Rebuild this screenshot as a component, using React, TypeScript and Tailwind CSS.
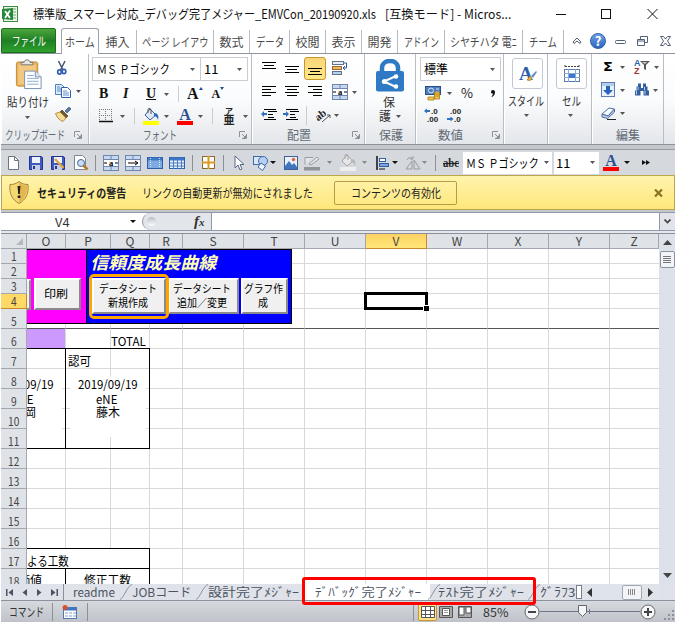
import React, { useLayoutEffect, useRef, useState } from "react";

type P = { className?: string; children?: React.ReactNode };

/* Condenses or stretches one line of text to the width of its box. */
function Fit({ className = "", children }: P) {
  const outer = useRef<HTMLSpanElement>(null);
  const inner = useRef<HTMLSpanElement>(null);
  const [s, setS] = useState(1);
  useLayoutEffect(() => {
    if (outer.current && inner.current && inner.current.offsetWidth)
      setS(outer.current.clientWidth / inner.current.offsetWidth);
  }, []);
  return (
    <span ref={outer} className={`block shrink-0 whitespace-nowrap leading-[14px] ${className}`}>
      <span ref={inner} className="inline-block origin-left" style={{ transform: s === 1 ? undefined : `scaleX(${s})` }}>
        {children}
      </span>
    </span>
  );
}

function Svg({ className = "", box = "0 0 16 16", children }: P & { box?: string }) {
  return (
    <svg viewBox={box} className={`block shrink-0 ${className}`} fill="none">
      {children}
    </svg>
  );
}

const Down = ({ className = "" }: P) => (
  <Svg box="0 0 5 3" className={`h-[3px] w-[5px] ${className}`}>
    <path d="M0 0h5L2.500 3z" fill="#555" />
  </Svg>
);
const DownBlack = ({ className = "" }: P) => (
  <Svg box="0 0 6 3" className={`h-[3px] w-[6px] ${className}`}>
    <path d="M0 0h6L3 3z" fill="#111" />
  </Svg>
);
const Launcher = ({ className = "" }: P) => (
  <Svg box="0 0 8 8" className={`h-2 w-2 ${className}`}>
    <path d="M.5 6V.5H6M3 3l3 3M7.500 3v4.500H3" stroke="#8d9197" />
    <path d="M7 4v3H4z" fill="#8d9197" />
  </Svg>
);
const Sep = ({ className = "" }: P) => <i className={`block w-px shrink-0 bg-[#c9ccd1] ${className}`} />;
const DarkSep = ({ className = "" }: P) => <i className={`block w-px shrink-0 bg-[#8b8f96] ${className}`} />;

function Lines({ rows, className = "", arrow }: { rows: number[][]; className?: string; arrow?: "l" | "r" }) {
  return (
    <Svg className={`size-4 ${className}`}>
      {rows.map(([x, y, w], i) => (
        <rect key={i} x={x} y={y} width={w} height="1" fill="#000" />
      ))}
      {arrow === "l" && <path d="M0 7l3-3v2h3v2H3v2z" fill="#2f6fc4" />}
      {arrow === "r" && <path d="M6 7L3 4v2H0v2h3v2z" fill="#2f6fc4" />}
    </Svg>
  );
}

const Paste = () => (
  <Svg box="0 0 28 32" className="ml-[14px] h-[31px] w-[28px]">
    <rect x="1" y="3" width="22" height="25" rx="2" fill="#e9b45f" stroke="#c28a36" />
    <rect x="3" y="6" width="18" height="20" fill="#f3c981" />
    <path d="M6 6V3.500h3C9 0 15 0 15 3.500h3V6z" fill="#e6e6e6" stroke="#777" />
    <path d="M9.500 12.500h11l6 6v12h-17z" fill="#fff" stroke="#7a8fb0" />
    <path d="M20.500 12.500v6h6" fill="#dbe6f5" stroke="#7a8fb0" />
    <path d="M12 17h7M12 20h12M12 23h12M12 26h12" stroke="#8eaad2" />
  </Svg>
);
const Scissors = ({ className = "" }: P) => (
  <Svg className={`size-4 ${className}`}>
    <path d="M4.500 1l4.500 9M11 1L6.500 10" stroke="#44546e" strokeWidth="1.500" />
    <ellipse cx="5.500" cy="12" rx="1.800" ry="2.200" stroke="#2e5cae" strokeWidth="1.700" />
    <ellipse cx="10" cy="11.500" rx="1.800" ry="2.200" stroke="#2e5cae" strokeWidth="1.700" />
  </Svg>
);
const Copy = ({ className = "" }: P) => (
  <Svg className={`size-4 ${className}`}>
    <path d="M.5 1.500h6l3 3v7h-9z" fill="#dceafa" stroke="#4f7fc4" />
    <path d="M6.500 4.500h6l3 3v7h-9z" fill="#fff" stroke="#2d62b0" />
    <path d="M2 4h3M2 6h4M2 8h4M8 8h4M8 10h6M8 12h6" stroke="#5b8ccc" />
  </Svg>
);
const Brush = ({ className = "" }: P) => (
  <Svg className={`size-4 ${className}`}>
    <path d="M10 5l4-4 2 2-4 4z" fill="#5a77a8" stroke="#354f7b" strokeWidth=".7" />
    <path d="M7 4l6 6-2 2-6-6z" fill="#6d5a35" stroke="#4d4026" strokeWidth=".7" />
    <path d="M5 6l6 6-3 3.500C5 14.500 2 12 .5 7.500z" fill="#f2dc96" stroke="#a87921" strokeWidth=".8" />
  </Svg>
);
const Bucket = ({ className = "", bar = "#ff0", gray = false }: P & { bar?: string; gray?: boolean }) => (
  <Svg className={`h-[17px] w-4 ${className}`} box="0 0 16 17">
    <path d="M7 1l6 6-6 5-5-5z" fill={gray ? "#e6e6e6" : "#dce9f8"} stroke={gray ? "#a6a6a6" : "#3f5f94"} />
    <path d="M5 5V1.500C5 0 8 0 8 2v4" stroke={gray ? "#a6a6a6" : "#555"} />
    <path d="M11 5c4 0 5 3 4 7-1-3-2-4-4-4z" fill={gray ? "#b5b5b5" : "#2c67b8"} />
    <rect y="13" width="16" height="4" fill={bar} />
  </Svg>
);
const Merge = ({ className = "", arrow = false }: P & { arrow?: boolean }) => (
  <Svg className={`size-4 ${className}`}>
    <rect x=".5" y=".5" width="15" height="15" fill="#c8d9ef" stroke="#6d87ae" />
    <path d="M0 4.500h16M0 11.500h16M8 1v3M8 12v4" stroke="#6d87ae" />
    <rect x="1" y="5" width="14" height="6" fill="#fff" />
    {arrow ? (
      <path d="M3 8h9M10 6l3 2-3 2" stroke="#000" />
    ) : (
      <>
        <path d="M1 8h3M12 8h3" stroke="#000" />
        <text x="8" y="10.500" textAnchor="middle" fontSize="8.500" fontWeight="bold" fontFamily="Liberation Serif, serif" fill="#000">a</text>
      </>
    )}
  </Svg>
);
const Wrap = ({ className = "" }: P) => (
  <Svg className={`size-4 ${className}`}>
    <rect x=".5" y="1.500" width="11" height="3" fill="#e8eef8" stroke="#63718c" />
    <rect x=".5" y="6.500" width="9" height="3" fill="#e9b66a" stroke="#9d6c28" />
    <rect x=".5" y="11.500" width="9" height="3" fill="#b9d0ef" stroke="#63718c" />
    <path d="M12 3h2.500v5H11M13 6l-2 2 2 2" stroke="#275ba8" />
  </Svg>
);
const Lock = () => (
  <Svg box="0 0 28 33" className="mx-auto h-[33px] w-[28px]">
    <path d="M6 14V9C6 -.5 22 -.5 22 9v5" stroke="#2e7ac4" strokeWidth="4.500" />
    <rect y="12" width="28" height="20.500" rx="2" fill="#2e7ac4" />
    <path d="M20 17L8 22.500 20 28" stroke="#fff" strokeWidth="2" />
    <circle cx="20" cy="17.500" r="2.300" fill="#fff" />
    <circle cx="8.500" cy="22.500" r="2.600" fill="#fff" />
    <circle cx="20" cy="27.500" r="2.300" fill="#fff" />
  </Svg>
);
const Money = ({ className = "" }: P) => (
  <Svg className={`size-4 ${className}`}>
    <rect x=".5" y="1.500" width="15" height="8" fill="#4d7ec0" stroke="#284e87" />
    <circle cx="6" cy="5.500" r="2.500" stroke="#d7e6fa" />
    <path d="M11 4h3M11 7h3" stroke="#d7e6fa" />
    <path d="M9.500 7h5v7h-5zM3 12h6v3H3z" fill="#f2c54a" stroke="#a67b14" strokeWidth=".8" />
    <path d="M9.500 9h5M9.500 11h5" stroke="#a67b14" strokeWidth=".8" />
  </Svg>
);
const Decimals = ({ className = "", less = false }: P & { less?: boolean }) => (
  <Svg className={`size-4 ${className}`}>
    <text x={less ? "4" : "7"} y="7" fontSize="8" fontWeight="bold" fontFamily="Liberation Sans, sans-serif" fill="#222">{less ? ".00" : ".0"}</text>
    <text x={less ? "8" : "3"} y="14.500" fontSize="8" fontWeight="bold" fontFamily="Liberation Sans, sans-serif" fill="#222">{less ? ".0" : ".00"}</text>
    {less ? <path d="M7.500 12L4.500 9.500V11H1v2h3.500v1.500z" fill="#2f6fc4" /> : <path d="M0 4l3-2.500V3h3v2H3v1.500z" fill="#2f6fc4" />}
  </Svg>
);
const TableIcon = ({ className = "", open = false }: P & { open?: boolean }) => (
  <Svg className={`size-4 ${className}`}>
    <rect x=".5" y="2.500" width="15" height="11" fill={open ? "#7fabe3" : "#eaf3ff"} stroke="#2e5fa8" />
    <path d="M1 4h14" stroke="#3c78c7" strokeWidth="3" />
    {open ? <path d="M3.500 3v10M12.500 3v10" stroke="#d5e5fa" strokeDasharray="1 1" /> : <path d="M1 8h14M1 11h14M4.500 5v9M8.500 5v9M12.500 5v9" stroke="#4a7cc0" />}
  </Svg>
);
const Disk = ({ className = "", pen = false }: P & { pen?: boolean }) => (
  <Svg className={`size-4 ${className}`}>
    <path d="M1.500 1.500h12l1 1v12h-13z" fill="#4259bd" stroke="#26358e" />
    <rect x="4" y="2" width="8" height="6" fill="#edf1fb" />
    <rect x="4" y="10" width="8" height="5" fill="#c5cde6" />
    <rect x="5" y="11" width="2" height="3" fill="#26358e" />
    {pen && <path d="M5 4l8.500 9" stroke="#e0a83e" strokeWidth="2.500" />}
  </Svg>
);
const RedA = ({ className = "" }: P) => (
  <div className={`flex h-[17px] w-4 shrink-0 flex-col items-center ${className}`}>
    <span className="h-[13px] font-['Liberation_Serif',serif] text-[16px] font-bold leading-[13px] text-[#2c4f8f]">A</span>
    <i className="block h-[4px] w-4 bg-[#f00]" />
  </div>
);

const Group = ({ w, label, launcher, children }: { w: string; label?: React.ReactNode; launcher?: string; children?: React.ReactNode }) => (
  <section className={`flex h-[90px] shrink-0 flex-col border-r border-[#b9bdc4] shadow-[inset_1px_0_#fff] ${w}`}>
    <div className="h-[73px]">{children}</div>
    <div className="flex h-[15px] items-center text-[12px] text-[#626a75]">
      {label}
      {launcher && <Launcher className={launcher} />}
    </div>
  </section>
);

const tabs: [string, string, string][] = [
  ["挿入", "w-[38px]", "w-[24px]"],
  ["ページ レイアウ", "w-[77px]", "w-[66px]"],
  ["数式", "w-[36px]", "w-[24px]"],
  ["データ", "w-[40px]", "w-[28px]"],
  ["校閲", "w-[36px]", "w-[24px]"],
  ["表示", "w-[36px]", "w-[24px]"],
  ["開発", "w-[36px]", "w-[24px]"],
  ["アドイン", "w-[47px]", "w-[35px]"],
  ["シヤチハタ 電ﾆ", "w-[78px]", "w-[67px]"],
  ["チーム", "w-[41px]", "w-[28px]"],
];

function TitleBar() {
  return (
    <header className="flex h-7 items-center bg-white">
      <Svg box="0 0 17 17" className="ml-px h-[17px] w-[17px]">
        <rect x="1.500" y=".5" width="14" height="15" fill="#e9f4e6" stroke="#3c8a44" />
        <path d="M11 3h3M11 6h3M11 9h3M11 12h3" stroke="#72a974" />
        <path d="M0 3l11-1v12L0 13z" fill="#26863a" />
        <path d="M3 5l5 7M8 4.500L3 12" stroke="#fff" strokeWidth="1.800" />
      </Svg>
      <Fit className="ml-[14px] w-[343px] text-[12.5px] text-[#111]">標準版_スマーレ対応_デバッグ完了メジャー_EMVCon_20190920.xls</Fit>
      <Fit className="ml-[9px] w-[126px] text-[12.5px] text-[#111]">[互換モード] - Micros...</Fit>
      <Svg box="0 0 102 12" className="ml-[45px] h-3 w-[102px]">
        <path d="M0 6.500h10M91.500 1l10 10M101.500 1l-10 10" stroke="#111" />
        <rect x="45.500" y="1.500" width="9" height="9" stroke="#111" />
      </Svg>
    </header>
  );
}

function TabBar() {
  return (
    <nav className="flex h-[26px] items-end border-b border-[#8e949d] bg-white text-[12px] text-[#4a4a4a]">
      <div className="flex h-[25px] w-[55px] items-center justify-center rounded-t-[2px] border border-[#1c6d1e] bg-gradient-to-b from-[#4aa63c] via-[#1d7f24] to-[#2fa12c] text-white">
        <Fit className="w-[34px]">ファイル</Fit>
      </div>
      <div className="-mb-px ml-[5px] flex h-[26px] w-[38px] items-center justify-center rounded-t-[3px] border border-b-0 border-[#9ba2ad] bg-white">
        <Fit className="w-[30px]">ホーム</Fit>
      </div>
      {tabs.map(([t, w, tw]) => (
        <div key={t} className={`flex h-[23px] shrink-0 items-center justify-center border-r border-[#b9bdc3] ${w}`}>
          <Fit className={tw}>{t}</Fit>
        </div>
      ))}
      <div className="flex h-[25px] items-center">
        <Svg box="0 0 10 8" className="ml-[8px] h-2 w-[10px]">
          <path d="M1 5l4-4 4 4-1 1.500-3-2.500-3 2.500z" fill="#fff" stroke="#4c5a6e" />
        </Svg>
        <div className="ml-[8px] flex size-4 items-center justify-center rounded-full border border-[#2b5fae] bg-gradient-to-b from-[#6d9fe3] to-[#2b66be] text-[13px] font-bold leading-none text-white">?</div>
        <Svg box="0 0 56 12" className="ml-[9px] h-3 w-[56px]">
          <rect x=".5" y="5.500" width="10" height="3" rx="1" stroke="#536077" />
          <path d="M25.500 4V1.500h7v6H30M22.500 4.500h7v6h-7zM22 6h7" stroke="#536077" />
          <path d="M45.500 1.500h3l2 2.500 2-2.500h3l-3 4.500 3 4.500h-3l-2-2.500-2 2.500h-3l3-4.500z" stroke="#536077" />
        </Svg>
      </div>
    </nav>
  );
}

function Ribbon() {
  return (
    <div className="flex h-[91px] border-b border-[#8d929a] bg-gradient-to-b from-white via-[#fbfcfd] to-[#e3e6ea]">
      <Group w="w-[88px]" label={<Fit className="ml-[4px] w-[60px]">クリップボード</Fit>} launcher="ml-[9px]">
        <div className="flex">
          <div className="w-[52px] pt-[5px]">
            <Paste />
            <Fit className="ml-[6px] mt-[5px] w-[42px] text-[12px] text-[#333]">貼り付け</Fit>
            <Down className="ml-[24px] mt-[7px]" />
          </div>
          <div className="pt-[6px]">
            <Scissors className="ml-[1px]" />
            <div className="mt-[7px] flex items-center">
              <Copy className="ml-[2px]" />
              <Down className="ml-[5px]" />
            </div>
            <Brush className="ml-[2px] mt-[7px]" />
          </div>
        </div>
      </Group>

      <Group w="w-[163px]" label={<Fit className="ml-[54px] w-[34px]">フォント</Fit>} launcher="ml-[62px]">
        <div className="flex pt-[3px] text-[12px]">
          <div className="ml-[3px] flex h-[24px] w-[109px] items-center border border-[#c9cdd3] bg-white">
            <Fit className="ml-[4px] w-[73px]">ＭＳ Ｐゴシック</Fit>
            <Down className="ml-[20px]" />
          </div>
          <div className="flex h-[24px] w-[47px] items-center border border-l-0 border-[#c9cdd3] bg-white">
            <Fit className="ml-[3px] w-[14px]">11</Fit>
            <Down className="ml-[19px]" />
          </div>
        </div>
        <div className="mt-[2px] flex h-[22px] items-center font-['Liberation_Serif',serif] text-[14px] font-bold leading-none text-[#111]">
          <span className="ml-[10px] w-[10px]">B</span>
          <span className="ml-[14px] w-[7px] italic">I</span>
          <span className="ml-[16px] w-[10px] underline">U</span>
          <Down className="ml-[8px]" />
          <Sep className="ml-[9px] h-[16px]" />
          <span className="ml-[8px] text-[16px]">A</span>
          <Svg box="0 0 4 3" className="mb-3 h-[3px] w-1"><path d="M0 3h4L2 0z" fill="#234d95" /></Svg>
          <span className="ml-[9px] text-[12px]">A</span>
          <Svg box="0 0 4 3" className="mb-3 h-[3px] w-1"><path d="M0 0h4L2 3z" fill="#234d95" /></Svg>
        </div>
        <div className="flex h-[22px] items-center">
          <Svg box="0 0 14 14" className="ml-[10px] size-[14px]">
            <path d="M.5 0v12M6.500 0v12M12.500 0v12M0 .5h13M0 6.500h13" stroke="#777" strokeDasharray="1 1" />
            <path d="M0 12.500h14" stroke="#111" strokeWidth="1.500" />
          </Svg>
          <Down className="ml-[7px]" />
          <Sep className="ml-[9px] h-[16px]" />
          <Bucket className="ml-[8px]" />
          <Down className="ml-[5px]" />
          <RedA className="ml-[8px]" />
          <Down className="ml-[5px]" />
          <Sep className="ml-[9px] h-[16px]" />
          <div className="ml-[10px] flex h-[18px] w-[12px] flex-col items-center justify-center text-[#222]">
            <span className="text-[8px] font-bold leading-[7px]">ア</span>
            <span className="text-[11px] font-bold leading-[11px]">亜</span>
          </div>
          <Down className="ml-[8px]" />
        </div>
      </Group>

      <Group w="w-[113px]" label={<Fit className="ml-[35px] w-[24px]">配置</Fit>} launcher="ml-[41px]">
        <div className="flex h-[26px] items-center pt-[2px]">
          <Lines className="ml-[10px]" rows={[[0, 2, 14], [2, 5, 10], [0, 8, 14]]} />
          <Lines className="ml-[7px]" rows={[[0, 6, 14], [2, 9, 10], [0, 12, 14]]} />
          <div className="ml-[3px] flex h-[23px] w-[22px] items-center justify-center rounded-[3px] border border-[#c8962e] bg-gradient-to-b from-[#fbd67a] to-[#ffe886]">
            <Lines className="ml-[2px]" rows={[[0, 8, 14], [2, 11, 10], [0, 14, 14]]} />
          </div>
          <Wrap className="ml-[6px]" />
        </div>
        <div className="flex h-[24px] items-center">
          <Lines className="ml-[10px]" rows={[[0, 2, 14], [0, 5, 9], [0, 8, 14], [0, 11, 9]]} />
          <Lines className="ml-[7px]" rows={[[0, 2, 14], [2, 5, 10], [0, 8, 14], [2, 11, 10]]} />
          <Lines className="ml-[7px]" rows={[[0, 2, 14], [5, 5, 9], [0, 8, 14], [5, 11, 9]]} />
          <Merge className="ml-[8px]" />
          <Down className="ml-[4px]" />
        </div>
        <div className="flex h-[22px] items-center">
          <Lines arrow="l" className="ml-[9px]" rows={[[3, 2, 12], [7, 4, 9], [7, 7, 5], [7, 10, 6], [3, 12, 12]]} />
          <Lines arrow="r" className="ml-[6px]" rows={[[3, 2, 12], [7, 4, 9], [7, 7, 5], [7, 10, 6], [3, 12, 12]]} />
          <Sep className="ml-[7px] h-[19px]" />
          <Svg className="ml-[9px] size-4">
            <text x="0" y="11" transform="rotate(-38 6 10)" fontSize="11" fontWeight="bold" fontFamily="Liberation Serif, serif" fill="#222">ab</text>
            <path d="M6 15l8-7M11 8h3v3" stroke="#555" />
          </Svg>
          <Down className="ml-[2px]" />
        </div>
      </Group>

      <Group w="w-[51px]" label={<Fit className="ml-[14px] w-[24px]">保護</Fit>}>
        <div className="pt-[5px] text-[12px] text-[#333]">
          <Lock />
          <Fit className="ml-[18px] mt-[3px] w-[12px]">保</Fit>
          <div className="flex items-center">
            <Fit className="ml-[14px] w-[12px]">護</Fit>
            <Down className="ml-[5px]" />
          </div>
        </div>
      </Group>

      <Group w="w-[88px]" label={<Fit className="ml-[22px] w-[25px]">数値</Fit>} launcher="ml-[29px]">
        <div className="flex pt-[3px]">
          <div className="ml-[4px] flex h-[24px] w-[81px] items-center border border-[#c9cdd3] bg-white text-[12px]">
            <Fit className="ml-[3px] w-[24px]">標準</Fit>
            <Down className="ml-[42px]" />
          </div>
        </div>
        <div className="mt-[1px] flex h-[22px] items-center">
          <Money className="ml-[9px]" />
          <Down className="ml-[6px]" />
          <Fit className="ml-[9px] w-[12px] text-[13px] text-[#222]">%</Fit>
          <Svg box="0 0 4 7" className="ml-[18px] h-[7px] w-1"><path d="M0 2a2 2 0 014 0c0 2-1 4-3 5l-.5-.7Q2 5 2 3.500 0 4 0 2z" fill="#111" /></Svg>
        </div>
        <div className="flex h-[22px] items-center">
          <Decimals className="ml-[8px]" />
          <Decimals less className="ml-[6px]" />
        </div>
      </Group>

      <Group w="w-[44px]">
        <div className="flex pt-[4px]">
          <div className="ml-[8px] flex h-[31px] w-[31px] items-center justify-center rounded-[3px] border border-[#c3c9d2] bg-white">
            <Svg box="0 0 18 18" className="size-[18px]">
              <text x="0" y="15" fontSize="19" fontFamily="Liberation Serif, serif" fontWeight="bold" fill="#2b5fae">A</text>
              <path d="M8 15l3-4 2 2q-1 4-5 2z" fill="#e0a83e" stroke="#996b1c" strokeWidth=".5" />
              <path d="M12 11l5-5 1 1-4 6z" fill="#6f8fc2" />
            </Svg>
          </div>
        </div>
        <Fit className="ml-[4px] mt-[5px] w-[36px] text-[12px] text-[#333]">スタイル</Fit>
        <Down className="ml-[20px] mt-[6px]" />
      </Group>

      <Group w="w-[44px]">
        <div className="flex pt-[4px]">
          <div className="ml-[8px] flex h-[31px] w-[31px] items-center justify-center rounded-[3px] border border-[#c3c9d2] bg-white">
            <Svg box="0 0 18 18" className="size-[18px]">
              <rect x="1.500" y="4.500" width="15" height="12" fill="#fff" stroke="#5779ae" />
              <path d="M1 8.500h16M1 12.500h16M5.500 4v13M12.500 4v13" stroke="#8ba8d3" />
              <rect x="6" y="9" width="6" height="4" fill="#3c78cf" />
              <path d="M2 1.500h14M2 0v3M16 0v3" stroke="#444" strokeDasharray="2 1" />
            </Svg>
          </div>
        </div>
        <Fit className="ml-[14px] mt-[5px] w-[19px] text-[12px] text-[#333]">セル</Fit>
        <Down className="ml-[20px] mt-[6px]" />
      </Group>

      <Group w="w-[72px]" label={<Fit className="ml-[24px] w-[24px]">編集</Fit>}>
        <div className="flex h-[26px] items-center">
          <Fit className="ml-[11px] w-[10px] font-['DejaVu_Sans',sans-serif] text-[13px] font-bold">Σ</Fit>
          <Down className="ml-[7px]" />
          <Svg className="ml-[9px] size-4">
            <text x="0" y="7" fontSize="9" fontWeight="bold" fontFamily="Liberation Sans, sans-serif" fill="#2b5fae">A</text>
            <text x="0" y="15" fontSize="9" fontWeight="bold" fontFamily="Liberation Sans, sans-serif" fill="#a8332c">Z</text>
            <path d="M6 2h10l-4 4v5l-2-1V6z" fill="#555" />
            <path d="M8 3h5l-2 2z" fill="#ccc" />
          </Svg>
          <Down className="ml-[4px]" />
        </div>
        <div className="flex h-[20px] items-center">
          <Svg className="ml-[9px] size-4">
            <rect x=".5" y=".5" width="13" height="14" fill="#eaf1fb" stroke="#5b7fb5" />
            <rect x="1" y="1" width="12" height="3" fill="#b4cdee" />
            <path d="M5 4h4v4h3l-5 5-5-5h3z" fill="#2464ba" />
          </Svg>
          <Down className="ml-[3px]" />
          <Svg className="ml-[9px] size-4">
            <path d="M4 1.500h3v3H4zM9 1.500h3v3H9zM2.500 4.500h4.500v4H2.500zM9 4.500h4.500v4H9zM1 8.500h5.500v5H1zM9.500 8.500H15v5H9.500zM6.500 6h3v3h-3z" fill="#345f9f" />
            <path d="M2.500 8.500v4M11 8.500v4M4 5v3M10.500 5v3" stroke="#b6cdea" />
          </Svg>
          <Down className="ml-[3px]" />
        </div>
        <div className="mt-[1px] flex h-[24px] items-center">
          <Svg className="ml-[9px] size-4">
            <path d="M1 9l7-6 5.500 1L7 11z" fill="#f7fafe" stroke="#4e6fa0" />
            <path d="M1 9v3l5.500 1.500L13.500 7V4L7 11z" fill="#b8cce8" stroke="#4e6fa0" />
            <path d="M6 14.500h9" stroke="#222" />
          </Svg>
          <Down className="ml-[3px]" />
        </div>
      </Group>
    </div>
  );
}

function QuickBar() {
  return (
    <div className="mt-[4px] flex h-[26px] items-center border-t border-[#989da6] bg-[#d5d9de]">
      <Svg className="ml-[5px] size-4">
        <path d="M2.500 1.500h6l4 4v9h-10z" fill="#fff" stroke="#6d7480" />
        <path d="M8.500 1.500v4h4" stroke="#6d7480" />
      </Svg>
      <Disk className="ml-[6px]" />
      <Disk pen className="ml-[6px]" />
      <Svg className="ml-[7px] size-4">
        <path d="M1.500.5h8l3 3v11h-11z" fill="#fff" stroke="#7d8794" />
        <circle cx="8" cy="8" r="3.500" fill="#c8def6" stroke="#50678a" />
        <path d="M10.500 10.500l4 4" stroke="#b87923" strokeWidth="2.500" />
      </Svg>
      <DarkSep className="ml-[6px] h-4" />
      <Merge className="ml-[7px]" />
      <Merge arrow className="ml-[6px]" />
      <TableIcon open className="ml-[6px]" />
      <TableIcon className="ml-[6px]" />
      <DarkSep className="ml-[7px] h-4" />
      <Svg box="0 0 14 14" className="ml-[9px] size-[14px]">
        <rect x=".5" y=".5" width="12" height="12" fill="#fff" stroke="#8a6a24" />
        <path d="M6.500 0v13M0 6.500h13" stroke="#d99a25" strokeWidth="2" />
      </Svg>
      <DarkSep className="ml-[7px] h-4" />
      <Svg className="ml-[8px] size-4">
        <path d="M3 1v12l3-3 2 5 2-1-2-4.500h4z" fill="#fff" stroke="#5a6b87" />
      </Svg>
      <Svg className="ml-[5px] size-4">
        <rect x=".5" y="1.500" width="8" height="8" fill="#d9e7f9" stroke="#3f6bab" />
        <circle cx="10" cy="6" r="4.500" fill="#b5d0f2" stroke="#3f6bab" />
        <path d="M8 8l4.500 3-3 4.500L5 12z" fill="#eef5fd" stroke="#3f6bab" />
      </Svg>
      <DownBlack className="ml-[1px]" />
      <Svg className="ml-[7px] size-4">
        <rect x="1.500" y="1.500" width="13" height="13" fill="#e8f1fc" stroke="#3f5f94" />
        <path d="M2 11l4-5 3 4 2-2 3 4v2H2z" fill="#3f76bd" />
        <circle cx="10.500" cy="4.500" r="1.800" fill="#e0683c" />
      </Svg>
      <Svg className="ml-[5px] size-4">
        <path d="M1 9.500V2.500h8M5 9l8-7 2 2-8 6z" fill="#e5e7ea" stroke="#9a9da2" />
        <rect y="12" width="16" height="3.500" fill="#909499" />
      </Svg>
      <Down className="ml-[7px] opacity-60" />
      <Bucket gray bar="#eee" className="ml-[8px]" />
      <Down className="ml-[6px] opacity-60" />
      <Svg className="ml-[8px] size-4">
        <path d="M2 1v14" stroke="#111" strokeWidth="1.500" />
        <rect x="4.500" y="3.500" width="6" height="3" fill="#fff" stroke="#345f9f" />
        <rect x="4.500" y="8.500" width="9" height="3" fill="#7ba5dc" stroke="#345f9f" />
        <path d="M4 14h6" stroke="#111" />
      </Svg>
      <DownBlack className="ml-[1px]" />
      <Svg className="ml-[7px] size-4">
        <path d="M1 14L7 6v8zM9 14V5l6 9z" fill="#d5d7da" stroke="#989b9f" />
        <path d="M2 5c1-3 4-3 6-1M8 1v3H5" stroke="#989b9f" />
      </Svg>
      <Down className="ml-[1px] opacity-60" />
      <DarkSep className="ml-[8px] h-4" />
      <Fit className="ml-[7px] w-[16px] font-['Liberation_Serif',serif] text-[12px] font-bold text-[#222]"><span className="line-through">abc</span></Fit>
      <div className="ml-[4px] flex h-[22px] w-[89px] items-center bg-white text-[12px]">
        <Fit className="ml-[3px] w-[73px]">ＭＳ Ｐゴシック</Fit>
        <Down className="ml-[5px]" />
      </div>
      <div className="ml-[2px] flex h-[22px] w-[45px] items-center bg-white text-[12px]">
        <Fit className="ml-[2px] w-[14px]">11</Fit>
        <Down className="ml-[20px]" />
      </div>
      <RedA className="ml-[4px]" />
      <DownBlack className="ml-[5px]" />
      <Svg box="0 0 8 5" className="ml-[12px] h-[5px] w-2"><path d="M0 0l4 2.500L0 5zM4 0l4 2.500L4 5z" fill="#111" /></Svg>
    </div>
  );
}

function MessageBar() {
  return (
    <div className="flex h-[35px] items-center border border-[#bba64d] bg-gradient-to-b from-[#fff4ad] to-[#fee779] text-[12px] text-[#222]">
      <Svg box="0 0 20 23" className="ml-[7px] h-[23px] w-5">
        <path d="M10 .5C7 3 4 3.500 1 3.500c-1 9 2 15 9 19 7-4 10-10 9-19-3 0-6-.5-9-3z" fill="#f6d873" stroke="#a28440" />
        <path d="M10 1.500v20c6-4 8-9 8-17-3 0-5-1-8-3z" fill="#e3b650" />
        <path d="M8.500 5h3l-.7 8H9.200zM8.700 14.500h2.600V17H8.700z" fill="#222" />
      </Svg>
      <Fit className="ml-[8px] w-[89px] font-bold">セキュリティの警告</Fit>
      <Fit className="ml-[16px] w-[171px]">リンクの自動更新が無効にされました</Fit>
      <div className="ml-[21px] flex h-[24px] w-[123px] items-center justify-center rounded-[2px] border border-[#b89b43]">
        <Fit className="w-[90px]">コンテンツの有効化</Fit>
      </div>
      <Svg box="0 0 9 8" className="ml-[197px] h-2 w-[9px]"><path d="M1 .5l7 7M8 .5l-7 7" stroke="#8b7325" strokeWidth="2.200" /></Svg>
    </div>
  );
}

function FormulaBar() {
  return (
    <div className="mt-[1px] flex h-[19px] border-y border-[#9299a4] bg-white text-[12px]">
      <div className="flex w-[141px] items-center">
        <Fit className="ml-[54px] w-[15px] text-[#333]">V4</Fit>
        <DownBlack className="ml-[60px]" />
      </div>
      <div className="flex w-[70px] items-center rounded-l-full border-l border-r border-[#9299a4] bg-[#e2e5ea]">
        <i className="ml-[4px] block size-[9px] rounded-full bg-gradient-to-b from-[#b9bdc5] to-white" />
        <span className="ml-[38px] font-['Liberation_Serif',serif] text-[15px] font-bold italic leading-none text-[#333]">f<span className="text-[11px]">x</span></span>
      </div>
      <div className="w-[447px]" />
      <div className="flex flex-1 items-center justify-center border-l border-[#9299a4] bg-[#e1e4ea]">
        <Svg box="0 0 7 5" className="h-[5px] w-[7px]"><path d="M.5.5l3 3 3-3" stroke="#444" strokeWidth="1.700" /></Svg>
      </div>
    </div>
  );
}

const cols = [["O", "w-[39px]"], ["P", "w-[45px]"], ["Q", "w-[39px]"], ["R", "w-[33px]"], ["S", "w-[61px]"], ["T", "w-[61px]"], ["U", "w-[61px]"], ["V", "w-[61px]"], ["W", "w-[61px]"], ["X", "w-[61px]"], ["Y", "w-[61px]"], ["Z", "w-[49px]"]];

const FormButton = ({ className = "", children }: P) => (
  <div className={`absolute flex flex-col items-center justify-center border-2 border-b-[#8a8a8a] border-l-white border-r-[#8a8a8a] border-t-white bg-[#f0f0f0] pb-[3px] pr-[3px] text-[11px] text-black ${className}`}>{children}</div>
);

function Sheet() {
  return (
    <div className="relative flex h-[350px] overflow-hidden">
      <div className="flex w-[658px] shrink-0 flex-col">
        <div className="flex h-[15px] shrink-0 text-[12px] leading-[14px] text-[#444]">
          <div className="flex w-[26px] shrink-0 items-end justify-end border-b border-r border-[#a3a8b0] bg-[#dfe2e7] p-[3px]">
            <Svg box="0 0 7 7" className="size-[7px]"><path d="M7 0v7H0z" fill="#b4b9c1" /></Svg>
          </div>
          {cols.map(([c, w]) => (
            <div key={c} className={`shrink-0 border-b border-r text-center ${w} ${c === "V" ? "border-[#c58a2c] bg-gradient-to-b from-[#fdd163] to-[#ffe77a]" : "border-[#a3a8b0] bg-[#dfe2e7]"}`}>{c}</div>
          ))}
        </div>
        {Array.from({ length: 18 }, (_, i) => i + 1).map((r) => (
          <div key={r} className={`flex shrink-0 ${r < 5 ? "h-[15px]" : "h-[20px]"}`}>
            <div className={`flex w-[26px] shrink-0 items-end justify-center border-b border-r text-[12px] text-[#444] ${r === 4 ? "border-[#c58a2c] bg-[#ffd966]" : "border-[#a3a8b0] bg-[#dfe2e7]"}`}>
              <Fit className={r > 9 ? "w-[11px]" : "w-[6px]"}>{r}</Fit>
            </div>
            {cols.map(([c, w]) => (
              <div key={c} className={`shrink-0 border-b ${w} ${c === "Z" ? "" : "border-r"} border-r-[#d9d9d9] ${r === 5 ? "border-b-[#555]" : "border-b-[#d9d9d9]"} ${r === 6 && c === "O" ? "bg-[#cc99ff]" : ""}`} />
            ))}
          </div>
        ))}
      </div>

      <div className="flex w-[16px] flex-col items-center bg-[#dde1e9]">
        <Svg box="0 0 9 5" className="mt-[6px] h-[5px] w-[9px]"><path d="M0 5h9L4.500 0z" fill="#444" /></Svg>
        <div className="mt-[6px] flex h-[17px] w-[15px] items-center justify-center rounded-[2px] border border-[#8c93a0] bg-[#f2f4f7]">
          <Svg box="0 0 8 8" className="size-2"><path d="M0 .5h8M0 2.500h8M0 4.500h8M0 6.500h8" stroke="#777" /></Svg>
        </div>
        <Svg box="0 0 9 5" className="mb-[6px] mt-auto h-[5px] w-[9px]"><path d="M0 0h9L4.500 5z" fill="#444" /></Svg>
      </div>

      {/* Drawing objects and text that spill over the cells */}
      <div className="absolute left-[26px] top-[15px] h-[75px] w-[265px] overflow-hidden border-y border-r border-black bg-[#00f]">
        <div className="h-full w-[60px] border-r border-black bg-[#f0f]" />
        <Fit className="absolute left-[65px] top-[5px] w-[126px] -skew-x-[14deg] text-[17px] font-bold text-[#ffffb3]">信頼度成長曲線</Fit>
        <FormButton className="-left-[20px] top-[29px] h-[31px] w-[24px]" />
        <FormButton className="left-[7px] top-[28px] h-[32px] w-[47px]"><Fit className="w-[24px]">印刷</Fit></FormButton>
        <FormButton className="left-[65px] top-[28px] h-[36px] w-[74px]">
          <Fit className="w-[58px]">データシート</Fit>
          <Fit className="w-[40px]">新規作成</Fit>
        </FormButton>
        <FormButton className="left-[141px] top-[28px] h-[36px] w-[71px]">
          <Fit className="w-[58px]">データシート</Fit>
          <Fit className="w-[50px]">追加／変更</Fit>
        </FormButton>
        <FormButton className="left-[214px] top-[28px] h-[36px] w-[47px]">
          <Fit className="w-[39px]">グラフ作</Fit>
          <Fit className="w-[10px]">成</Fit>
        </FormButton>
        <i className="absolute left-[62px] top-[24px] h-[45px] w-[80px] rounded-[5px] border-[3px] border-[#ffa500]" />
      </div>

      <div className="absolute left-[26px] top-[114px] h-[101px] w-[123px] overflow-hidden border-y border-r border-black text-[12px] text-black">
        <i className="absolute left-0 top-[27px] h-[61px] w-[35px] bg-white" />
        <i className="absolute left-[43px] top-[27px] h-[61px] w-[76px] bg-white" />
        <i className="absolute left-[38px] top-0 h-[100px] w-px bg-black" />
        <Fit className="absolute left-[41px] top-[5px] w-[23px]">認可</Fit>
        <Fit className="absolute left-[51px] top-[28px] w-[60px]">2019/09/19</Fit>
        <Fit className="absolute left-[69px] top-[43px] w-[21px]">eNE</Fit>
        <Fit className="absolute left-[69px] top-[56px] w-[24px]">藤木</Fit>
        <Fit className="absolute -left-[33px] top-[28px] w-[60px]">2019/09/19</Fit>
        <Fit className="absolute -left-[15px] top-[43px] w-[21px]">eNE</Fit>
        <Fit className="absolute -left-[15px] top-[56px] w-[24px]">富岡</Fit>
      </div>
      <Fit className="absolute left-[110px] top-[100px] w-[35px] text-[12px]">TOTAL</Fit>

      <div className="absolute left-[26px] top-[314px] h-[36px] w-[123px] overflow-hidden border-r border-t border-black text-[12px]">
        <i className="absolute left-0 top-0 h-[19px] w-[122px] bg-white" />
        <i className="absolute left-0 top-[19px] h-px w-[122px] bg-black" />
        <i className="absolute left-[38px] top-[20px] h-4 w-px bg-black" />
        <i className="absolute left-[83px] top-[20px] h-4 w-px bg-white" />
        <Fit className="absolute left-0 top-[5px] w-[42px]">よる工数</Fit>
        <Fit className="absolute -left-[9px] top-[24px] w-[24px]">価値</Fit>
        <Fit className="absolute left-[57px] top-[24px] w-[47px]">修正工数</Fit>
      </div>

      <div className="absolute left-[363px] top-[58px] h-[18px] w-[64px] border-[3px] border-black" />
      <i className="absolute left-[422px] top-[71px] size-[6px] border-l border-t border-white bg-black" />
    </div>
  );
}

const Slash = ({ className = "" }: P) => (
  <Svg box="0 0 14 16" className={`h-4 w-[14px] ${className}`}><path d="M1 15.500C5 14 8 2 13 .5" stroke="#8a919d" /></Svg>
);

function SheetTabs() {
  return (
    <div className="relative flex h-[17px] items-center border-b border-[#8d939e] bg-[#dfe2e8] text-[12px] text-[#4b5462]">
      <Svg box="0 0 52 7" className="ml-[5px] h-[7px] w-[52px]">
        <path d="M0 0h1.500v7H0zM7 0v7L2.500 3.500zM21 0v7l-4.500-3.500zM31 0v7l4.500-3.500zM45 0v7l4.500-3.500zM50.500 0H52v7h-1.500z" fill="#4b5462" />
      </Svg>
      <i className="ml-[5px] h-4 w-px bg-[#8a919d]" />
      <Fit className="ml-[9px] w-[42px]">readme</Fit>
      <Slash className="ml-[4px]" />
      <Fit className="-ml-px w-[59px]">JOBコード</Fit>
      <Slash className="ml-[4px]" />
      <Fit className="-ml-px w-[91px]">設計完了ﾒｼﾞｬｰ</Fit>
      <div className="ml-[6px] flex h-4 w-[125px] items-center bg-white">
        <Fit className="ml-[10px] w-[106px]">ﾃﾞﾊﾞｯｸﾞ完了ﾒｼﾞｬｰ</Fit>
      </div>
      <Slash className="-ml-[3px]" />
      <Fit className="-ml-[3px] w-[86px]">ﾃｽﾄ完了ﾒｼﾞｬｰ</Fit>
      <Slash className="ml-[3px]" />
      <Fit className="-ml-px w-[36px]">ｸﾞﾗﾌ3</Fit>
      <i className="flex h-[14px] w-[6px] shrink-0 border border-[#777f8c] bg-white" />
      <div className="flex h-4 w-[77px] items-center bg-[#dfe3ea]">
        <Svg box="0 0 5 9" className="ml-[5px] h-[9px] w-[5px]"><path d="M5 0v9L0 4.500z" fill="#333" /></Svg>
        <div className="ml-[30px] flex h-[15px] w-5 items-center justify-center rounded-[2px] border border-[#a2a8b3] bg-[#f2f4f7]">
          <Svg box="0 0 8 6" className="h-[6px] w-2"><path d="M.5 0v6M2.500 0v6M4.500 0v6M6.500 0v6" stroke="#888" /></Svg>
        </div>
        <Svg box="0 0 5 9" className="ml-[6px] h-[9px] w-[5px]"><path d="M0 0v9l5-4.500z" fill="#333" /></Svg>
      </div>
      <i className="absolute -top-[7px] left-[301px] z-10 h-[28px] w-[234px] rounded-[3px] border-[3px] border-[#f00]" />
    </div>
  );
}

function StatusBar() {
  return (
    <footer className="flex h-[21px] items-center bg-gradient-to-b from-[#d6d9de] to-[#bfc3c9] text-[12px] text-[#333]">
      <Fit className="ml-[8px] w-[35px]">コマンド</Fit>
      <DarkSep className="ml-[8px] h-[18px]" />
      <Svg className="ml-[9px] size-4">
        <rect x="1.500" y="3.500" width="13" height="11" fill="#fff" stroke="#5576a7" />
        <path d="M2 5h12" stroke="#3f76c4" strokeWidth="3" />
        <path d="M3 9h3M7 9h3M11 9h3M3 12h3M7 12h3M11 12h3" stroke="#7f9dc9" />
        <circle cx="3" cy="3.500" r="2.500" fill="#d8512b" />
      </Svg>
      <DarkSep className="ml-[9px] h-[18px]" />
      <DarkSep className="ml-[325px] h-[18px]" />
      <div className="ml-[4px] flex h-[19px] w-[19px] items-center justify-center rounded-[2px] border border-[#c8962e] bg-[#ffe38a]">
        <Svg box="0 0 14 12" className="h-3 w-[14px]"><path d="M.5.5h13v11H.5zM0 4.500h14M0 8.500h14M4.500 0v12M9.500 0v12" fill="#fff" stroke="#555" /></Svg>
      </div>
      <Svg box="0 0 34 12" className="ml-[2px] h-3 w-[34px]">
        <path d="M.5.5h13v11H.5z" fill="#aaa" stroke="#555" /><path d="M3.500 2.500h7v7h-7z" fill="#fff" stroke="#555" /><path d="M5 4.500h4M5 6.500h4" stroke="#999" />
        <path d="M19.500.5h13v11h-13z" fill="#aaa" stroke="#555" /><path d="M20 1h5v8h-5zM27 1h5v6h-5z" fill="#fff" stroke="#555" />
      </Svg>
      <Fit className="ml-[10px] w-[25px]">85%</Fit>
      <Svg box="0 0 134 18" className="ml-[15px] h-[18px] w-[134px]">
        <path d="M17 8.500h100" stroke="#6e7789" /><path d="M66.500 6v5" stroke="#6e7789" />
        <circle cx="9" cy="9" r="7" fill="#f5f6f8" stroke="#666" /><path d="M5 9h8" stroke="#444" strokeWidth="2" />
        <path d="M55.500 2.500h8v7l-4 4-4-4z" fill="#f5f6f8" stroke="#666" />
        <circle cx="125" cy="9" r="7" fill="#f5f6f8" stroke="#666" /><path d="M121 9h8M125 5v8" stroke="#444" strokeWidth="2" />
      </Svg>
      <Svg box="0 0 11 11" className="ml-auto mt-[8px] size-[11px]">
        <path d="M8 0h2v2H8zM4 4h2v2H4zM8 4h2v2H8zM0 8h2v2H0zM4 8h2v2H4zM8 8h2v2H8z" fill="#8c9199" />
      </Svg>
    </footer>
  );
}

export default function App() {
  return (
    <div className="h-[623px] w-[676px] overflow-hidden bg-white px-px font-['Noto_Sans_CJK_JP',sans-serif]">
      <TitleBar />
      <TabBar />
      <div className="bg-[#c4c7cc]">
        <Ribbon />
        <QuickBar />
        <MessageBar />
        <div className="h-px" />
        <FormulaBar />
        <div className="h-[3px] border-b border-[#8a8f98] bg-[#e4e7ee]" />
      </div>
      <Sheet />
      <SheetTabs />
      <StatusBar />
    </div>
  );
}
